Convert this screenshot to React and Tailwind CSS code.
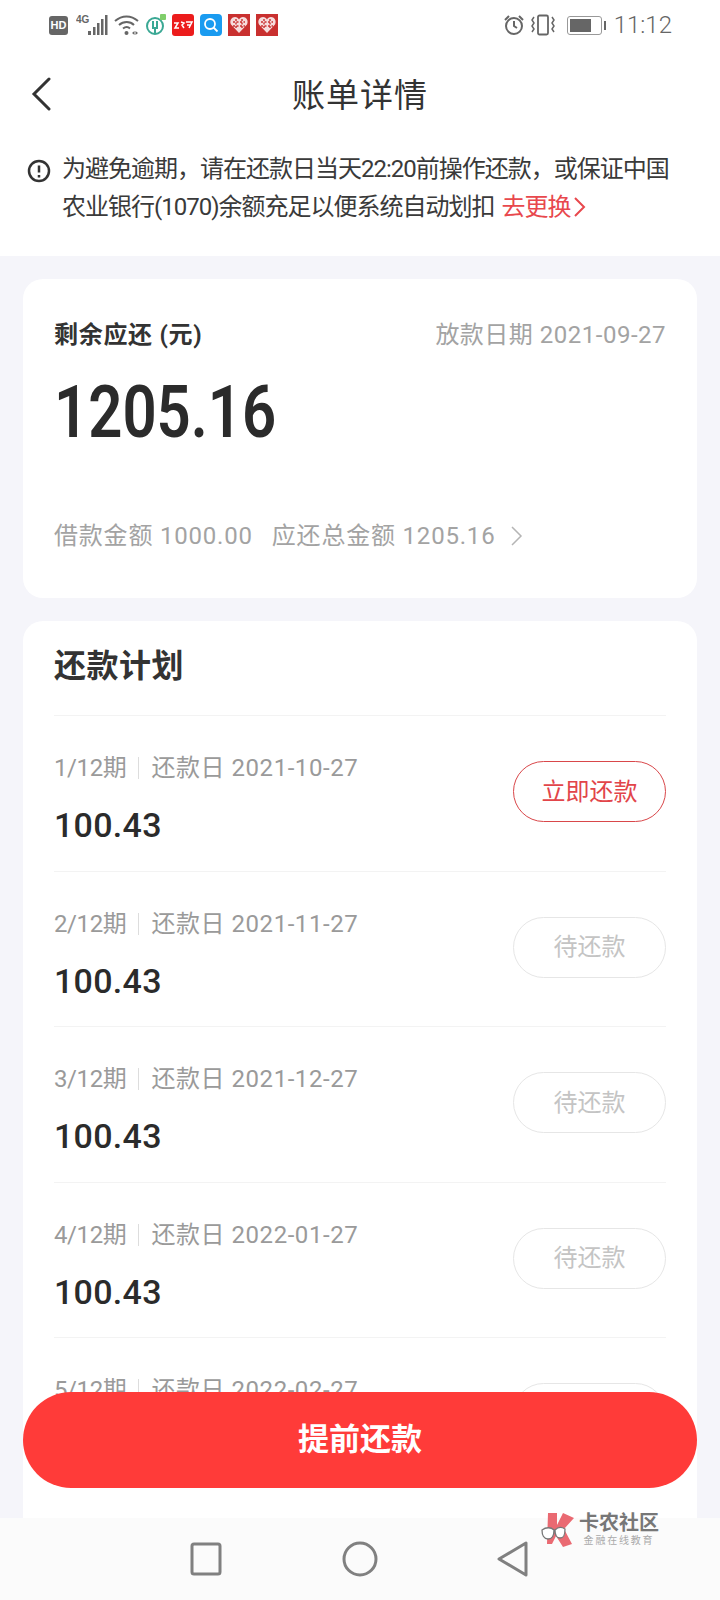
const FONT = '"Roboto", "Noto Sans CJK SC", sans-serif';

const rows = [
  { term: '1/12期', date: '2021-10-27', active: true },
  { term: '2/12期', date: '2021-11-27' },
  { term: '3/12期', date: '2021-12-27' },
  { term: '4/12期', date: '2022-01-27' },
  { term: '5/12期', date: '2022-02-27' },
];

const HeartApp = () => (
  <svg width="22" height="22" viewBox="0 0 22 22">
    <rect width="22" height="22" fill="#c9302f" />
    <path d="M11 19 3 10.500C1 6.500 4 3 7 3c2 0 3.200 1 4 2.500C11.800 4 13 3 15 3c3 0 6 3.500 4 7.500z" fill="#f6dcdc" />
    <path d="M5 8h12M5 12h12M8 5v9M14 5v9" stroke="#c9302f" strokeWidth="1.400" strokeDasharray="2 1.500" />
  </svg>
);

const StatusBar = () => (
  <div className="h-[50px] flex items-center justify-between pl-[49px] pr-[48px]">
    <div className="flex items-center">
      <div className="w-[19px] h-[19px] rounded-[3px] bg-[#666666] text-white text-[11px] font-bold flex items-center justify-center font-['Liberation_Sans',sans-serif]">HD</div>
      <svg width="34" height="22" viewBox="0 0 34 22" className="ml-[8px]">
        <text x="0" y="9" fontSize="10" fontWeight="700" fill="#666666" fontFamily="Liberation Sans, sans-serif">4G</text>
        <rect x="12" y="17" width="3" height="4" fill="#666666" />
        <rect x="17" y="13" width="2.500" height="8" fill="#666666" />
        <rect x="21" y="9" width="2.500" height="12" fill="#666666" />
        <rect x="25" y="5" width="2.500" height="16" fill="#666666" />
        <rect x="29" y="1" width="2.500" height="20" fill="#666666" />
      </svg>
      <svg width="26" height="22" viewBox="0 0 26 22" className="ml-[4px]" fill="none" stroke="#666666" strokeWidth="2">
        <path d="M1 7c7-6 16-6 23 0M5 11c4.500-4 11-4 15 0M9 14.500c2.500-2 5-2 7 0" />
        <circle cx="12.500" cy="19" r="2" fill="#666666" stroke="none" />
        <path d="m18 19 2.500-2v4zm6 0-2.500-2v4z" fill="#666666" stroke="none" />
      </svg>
      <svg width="22" height="22" viewBox="0 0 22 22" className="ml-[5px]" fill="none" stroke="#3aa894" strokeWidth="2">
        <circle cx="10" cy="12" r="8" />
        <path d="M8 7v8M12 7v8M10 13v7" stroke="#3aa894" />
        <rect x="15" y="0" width="6" height="6" rx="1" fill="#7fce6a" stroke="none" />
      </svg>
      <svg width="22" height="22" viewBox="0 0 22 22" className="ml-[5px]">
        <rect width="22" height="22" rx="3" fill="#ec1c1c" />
        <path d="M2 9h4l-3 5h4M9 8l3 1-2 2 2 3M14 8h6l-3 6M15 11h4" fill="none" stroke="#ffffff" strokeWidth="1.500" />
      </svg>
      <div className="ml-[6px] w-[22px] h-[22px] rounded-[4px] bg-[#1a9bf0] flex items-center justify-center">
        <svg width="16" height="16" viewBox="0 0 16 16" fill="none" stroke="#ffffff" strokeWidth="1.800">
          <circle cx="7" cy="7" r="5" />
          <path d="m10.500 10.500 4 4" />
        </svg>
      </div>
      <div className="ml-[6px]"><HeartApp /></div>
      <div className="ml-[6px]"><HeartApp /></div>
    </div>
    <div className="flex items-center text-[#666666]">
      <svg width="22" height="22" viewBox="0 0 22 22" fill="none" stroke="#666666" strokeWidth="2">
        <circle cx="11" cy="12" r="8" />
        <path d="M11 7v5l3 2M2 6l4-4M20 6l-4-4" />
      </svg>
      <svg width="26" height="22" viewBox="0 0 26 22" fill="none" stroke="#666666" strokeWidth="1.800" className="ml-[5px]">
        <rect x="8" y="1.500" width="10" height="19" rx="1.500" />
        <path d="M4 3 2 6l2 3-2 3 2 3-2 3M22 3l2 3-2 3 2 3-2 3 2 3" strokeWidth="1.500" />
      </svg>
      <div className="ml-[11px] flex items-center">
        <div className="w-[35px] h-[19px] rounded-[3px] border border-[#999999] p-[2px]">
          <div className="w-[21px] h-full bg-[#666666]" />
        </div>
        <div className="ml-[2px] w-[2px] h-[9px] bg-[#666666]" />
      </div>
      <span className="ml-[8px] text-[24px] leading-none font-['Roboto',sans-serif] font-light">11:12</span>
    </div>
  </div>
);

const Row = ({ term, date, active }) => (
  <div className="h-[155.500px] border-t border-[#f3f3f3] flex items-start justify-between">
    <div className="pt-[37px]">
      <div className="flex items-center h-[30px] text-[24px] leading-[30px] text-[#9a9a9a]">
        <span className="tracking-[-0.400px]">{term}</span>
        <span className="w-px h-[22px] bg-[#dddddd] mx-[12px]" />
        <span className="tracking-[0.550px]">还款日 {date}</span>
      </div>
      <div className="mt-[22px] text-[34px] leading-[40px] font-medium text-[#2b2b2b] tracking-[0.300px]">100.43</div>
    </div>
    <div
      className={
        active
          ? 'mt-[45px] w-[153px] h-[61px] rounded-full border border-[#d9474a] text-[#e2454a] text-[24px] flex items-center justify-center'
          : 'mt-[45px] w-[153px] h-[61px] rounded-full border border-[#e6e6e6] text-[#c4c4c4] text-[24px] flex items-center justify-center'
      }
    >
      {active ? '立即还款' : '待还款'}
    </div>
  </div>
);

const App = () => {
  return (
    <div className="relative h-[1600px] w-[720px] overflow-hidden bg-[#f5f5fa]" style={{ fontFamily: FONT }}>
      <div className="bg-white h-[256px]">
        <StatusBar />
        <div className="relative h-[88px] flex items-center justify-center pt-[4px]">
          <svg width="24" height="36" viewBox="0 0 24 36" fill="none" stroke="#333333" strokeWidth="3" strokeLinecap="round" className="absolute left-[29px] top-[27px]">
            <path d="M20 2 5 17l15 15" />
          </svg>
          <h1 className="text-[33px] font-normal text-[#333333] tracking-[1px]">账单详情</h1>
        </div>
        <div className="flex pl-[27px] pr-[20px] pt-[13px]">
          <svg width="24" height="24" viewBox="0 0 24 24" fill="none" stroke="#333333" strokeWidth="2.500" className="mt-[8px] shrink-0">
            <circle cx="12" cy="12" r="10" />
            <path d="M12 6.500v7M12 16v2.500" />
          </svg>
          <p className="ml-[11px] text-[24px] leading-[37.500px] text-[#3a3a3a] tracking-[-1px] whitespace-nowrap">
            为避免逾期，请在还款日当天22:20前操作还款，或保证中国
            <br />
            农业银行(1070)余额充足以便系统自动划扣
            <span className="ml-[7px] text-[#e8484d] inline-flex items-center">
              去更换
              <svg width="14" height="22" viewBox="0 0 14 22" fill="none" stroke="#e8484d" strokeWidth="2" className="ml-[1px]">
                <path d="m3 2 9 9-9 9" />
              </svg>
            </span>
          </p>
        </div>
      </div>

      <div className="flex flex-col gap-[23px] px-[23px] pt-[23px]">
        <section className="bg-white rounded-[20px] h-[319px] px-[31px] pt-[38px]">
          <div className="flex items-center justify-between">
            <span className="text-[24px] leading-[36px] font-bold text-[#333333] tracking-[0.700px]">剩余应还 (元)</span>
            <span className="text-[24px] leading-[36px] text-[#a3a3a3] tracking-[0.500px]">放款日期 2021-09-27</span>
          </div>
          <div className="mt-[19px] text-[73px] leading-[80px] font-semibold text-[#2b2b2b] scale-x-[0.82] origin-left">1205.16</div>
          <div className="mt-[66px] flex items-center text-[24px] leading-[36px] text-[#a3a3a3] tracking-[0.800px]">
            <span>借款金额 1000.00</span>
            <span className="ml-[19px]">应还总金额 1205.16</span>
            <svg width="16" height="24" viewBox="0 0 16 24" fill="none" stroke="#b5b5b5" strokeWidth="1.500" className="ml-[14px]">
              <path d="m3 3 9 9-9 9" />
            </svg>
          </div>
        </section>

        <section className="bg-white rounded-t-[20px] px-[31px] h-[1000px]">
          <h2 className="h-[94px] pb-[5px] flex items-center text-[32px] font-bold text-[#333333] tracking-[0.500px]">还款计划</h2>
          {rows.map((row) => (
            <Row key={row.term} {...row} />
          ))}
        </section>
      </div>

      <button className="absolute left-[23px] top-[1392px] w-[674px] h-[96px] rounded-full bg-[#ff3b39] text-white text-[31px] font-bold">
        提前还款
      </button>

      <div className="absolute left-0 right-0 top-[1518px] h-[82px] bg-[#fbfbfb]">
        <svg width="720" height="82" viewBox="0 0 720 82" fill="none" stroke="#808080" strokeWidth="3">
          <rect x="192" y="26" width="28" height="30" rx="2" />
          <circle cx="360" cy="41" r="16" />
          <path d="M526 25v32l-27-16z" strokeLinejoin="round" />
        </svg>
        <div className="absolute left-[541px] top-[-6px] flex items-center">
          <svg width="36" height="34" viewBox="0 0 36 34">
            <path d="M7 0h9v12l6-12 11 5-10 11 8 15-9 3-7-11-4 8H6z" fill="#ea6a72" />
            <path d="M1 17c4-3 9-3 12 0 0 6-2 9-6 9-4 0-6-4-6-9zM14 17c3-3 7-3 10-1 0 6-1 9-5 9-3 0-5-3-5-8z" fill="#ffffff" stroke="#777777" strokeWidth="1.300" />
          </svg>
          <div className="ml-[2px] flex flex-col items-center">
            <span className="text-[20px] leading-[22px] font-bold text-[#777777]">卡农社区</span>
            <span className="text-[10px] leading-[13px] text-[#aaaaaa] tracking-[1.800px]">金融在线教育</span>
          </div>
        </div>
      </div>
    </div>
  );
};

export default App;
